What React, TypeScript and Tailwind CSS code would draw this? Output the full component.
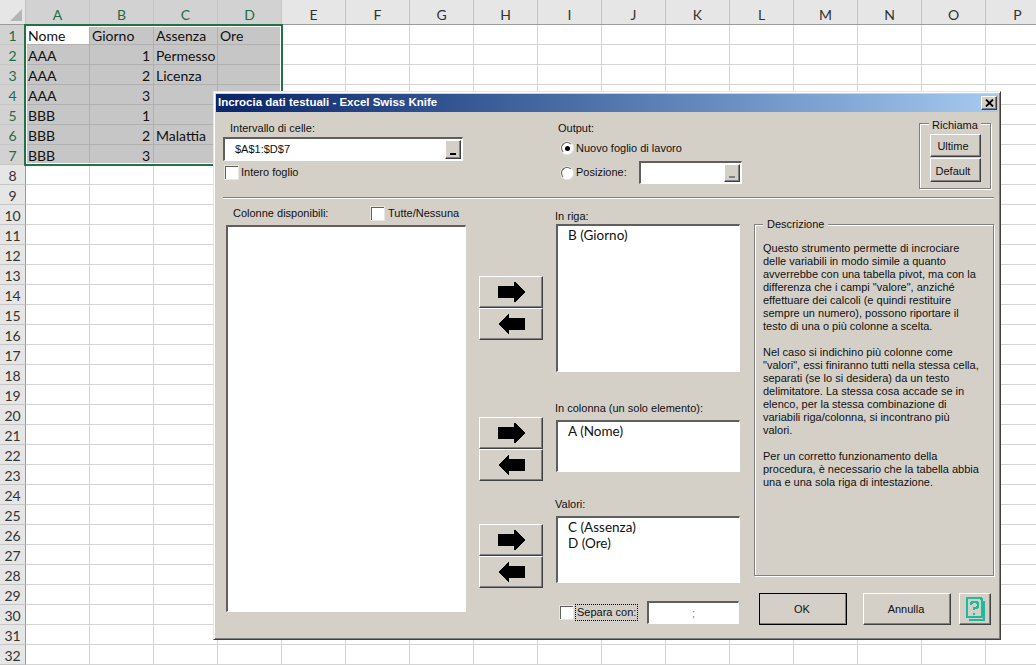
import React from "react";

const COLS = ["A","B","C","D","E","F","G","H","I","J","K","L","M","N","O","P"];
const ROWS = Array.from({ length: 32 }, (_, i) => i + 1);
const DATA: Record<number, [string, string, string, string]> = {
  1: ["Nome", "Giorno", "Assenza", "Ore"],
  2: ["AAA", "1", "Permesso", ""],
  3: ["AAA", "2", "Licenza", ""],
  4: ["AAA", "3", "", ""],
  5: ["BBB", "1", "", ""],
  6: ["BBB", "2", "Malattia", ""],
  7: ["BBB", "3", "", ""],
};

const raised = "bg-[#d4d0c8] border-t border-l border-t-white border-l-white border-r border-b border-r-[#404040] border-b-[#404040] shadow-[inset_-1px_-1px_0_#808080]";
const sunken = "bg-white border-r border-b border-r-white border-b-white border-t-2 border-l-2 border-t-[#5f5f5f] border-l-[#5f5f5f]";

function Sheet() {
  return (
    <div className="w-[1036px] h-[665px] overflow-hidden bg-white font-['Lato',sans-serif] text-[14px] text-[#111]">
      <div className="flex h-[25px] border-b border-b-[#9b9b9b] bg-[#e6e6e6]">
        <div className="w-[26px] shrink-0 border-r border-r-[#c0c0c0] flex items-end justify-end pr-[3px] pb-[3px]">
          <svg width="12" height="12" viewBox="0 0 12 12"><polygon points="12,0 12,12 0,12" fill="#b5b5b5" /></svg>
        </div>
        {COLS.map((c, i) => (
          <div key={c} className={`w-[64px] shrink-0 border-r border-r-[#c6c6c6] flex items-center justify-center pt-[4px] ${i < 4 ? "bg-[#d2d2d2] text-[#1f6b45]" : "text-[#333]"}`}>{c}</div>
        ))}
      </div>
      {ROWS.map((r) => {
        const d = DATA[r];
        return (
          <div key={r} className="flex h-[20px]">
            <div className={`w-[26px] shrink-0 border-r border-r-[#9b9b9b] border-b border-b-[#c6c6c6] flex items-center justify-center pt-[1px] ${d ? "bg-[#d2d2d2] text-[#1f6b45]" : "bg-[#e6e6e6] text-[#333]"}`}>{r}</div>
            {COLS.map((c, i) => {
              const sel = d && i < 4;
              const a1 = r === 1 && i === 0;
              const v = d && i < 4 ? d[i] : "";
              const num = /^\d$/.test(v);
              return (
                <div key={c} className={`w-[64px] shrink-0 border-r border-b flex items-center pt-[1px] px-[2px] whitespace-nowrap ${num ? "justify-end pr-[3px]" : "justify-start"} ${a1 ? "bg-white border-[#b0b0b0]" : sel ? "bg-[#c6c6c6] border-[#b0b0b0]" : "border-[#d4d4d4]"}`}>{v}</div>
              );
            })}
          </div>
        );
      })}
    </div>
  );
}

function ArrowRight() {
  return <svg width="27" height="20" viewBox="0 0 27 20" shapeRendering="crispEdges"><polygon points="0,4 16,4 16,0 17,0 27,10 17,20 16,20 16,16 0,16" fill="#000" /></svg>;
}
function ArrowLeft() {
  return <svg width="27" height="20" viewBox="0 0 27 20" shapeRendering="crispEdges"><polygon points="27,4 11,4 11,0 10,0 0,10 10,20 11,20 11,16 27,16" fill="#000" /></svg>;
}
function ArrowPair({ className }: { className?: string }) {
  return (
    <div className={`flex flex-col ${className ?? ""}`}>
      <button className={`${raised} w-[64px] h-[32px] flex items-center justify-center`}><ArrowRight /></button>
      <button className={`${raised} w-[64px] h-[32px] flex items-center justify-center`}><ArrowLeft /></button>
    </div>
  );
}
function Check({ children, className }: { children: React.ReactNode; className?: string }) {
  return (
    <label className={`flex items-center ${className ?? ""}`}>
      <span className="w-[13px] h-[13px] bg-white border-t border-l border-[#5f5f5f] border-r-white border-b-white shadow-[0_0_0_1px_#e8e6e1] shrink-0" />
      {children}
    </label>
  );
}
function Radio({ on }: { on?: boolean }) {
  return (
    <span className="w-[12px] h-[12px] rounded-full bg-white border border-[#5f5f5f] border-r-white border-b-white shadow-[0_0_0_1px_#e8e6e1] flex items-center justify-center shrink-0">
      {on && <span className="w-[5px] h-[5px] rounded-full bg-black" />}
    </span>
  );
}
function RefInput({ value, disabled, className }: { value?: string; disabled?: boolean; className?: string }) {
  return (
    <div className={`${sunken} flex items-stretch ${className ?? ""}`}>
      <span className="flex-1 pl-[10px] flex items-center">{value}</span>
      <button className={`${raised} w-[16px] my-px mr-[1px] flex items-end justify-center pb-[3px]`}>
        <span className={`w-[6px] h-[2px] ${disabled ? "bg-[#808080]" : "bg-black"}`} />
      </button>
    </div>
  );
}
function ListBox({ items, className }: { items: string[]; className?: string }) {
  return (
    <div className={`${sunken} pl-[10px] pt-[1px] w-[184px] font-['Lato',sans-serif] text-[13.5px] leading-[16px] ${className ?? ""}`}>
      {items.map((t) => <div key={t}>{t}</div>)}
    </div>
  );
}

function Dialog() {
  return (
    <div className="absolute left-[213px] top-[91px] w-[788px] h-[549px] bg-[#d4d0c8] border border-t-[#e8e6e1] border-l-[#e8e6e1] border-r-[#404040] border-b-[#404040] shadow-[inset_1px_1px_0_#fff,inset_-1px_-1px_0_#808080] pt-[2px] px-[1px] font-['Liberation_Sans',sans-serif] text-[11px] text-[#111]">
      <div className="mx-[1px] h-[18px] bg-gradient-to-r from-[#0a246a] to-[#a6caf0] flex items-center justify-between pl-[2px] pr-[1px]">
        <span className="text-white font-bold text-[11.5px]">Incrocia dati testuali - Excel Swiss Knife</span>
        <button className={`${raised} w-[16px] h-[14px] flex items-center justify-center`}>
          <svg width="9" height="8" viewBox="0 0 9 8"><path d="M1 0.500L8 7.500M8 0.500L1 7.500" stroke="#000" strokeWidth="1.800" /></svg>
        </button>
      </div>

      {/* top area */}
      <div className="flex h-[85px] pl-[8px] pr-[5px]">
        <div className="w-[240px] pt-[8px]">
          <div className="h-[16px] pl-[7px] flex items-center">Intervallo di celle:</div>
          <RefInput value="$A$1:$D$7" className="h-[24px] mt-px" />
          <Check className="mt-[3px] ml-[2px] gap-[3px]"><span>Intero foglio</span></Check>
        </div>
        <div className="ml-[95px] w-[190px] pt-[8px]">
          <div className="h-[16px] flex items-center">Output:</div>
          <div className="flex items-center gap-[3px] ml-[3px] mt-[4px] h-[16px]"><Radio on /><span className="mt-[1px]">Nuovo foglio di lavoro</span></div>
          <div className="flex items-center ml-[3px] mt-[5px] h-[23px]">
            <Radio /><span className="ml-[3px] w-[63px]">Posizione:</span>
            <RefInput className="h-[23px] w-[103px]" disabled />
          </div>
        </div>
        <div className="relative ml-auto mr-[3px] mt-[11px] w-[72px] h-[66px] border border-[#808080] shadow-[1px_1px_0_#fff,inset_1px_1px_0_#fff] flex flex-col items-center pt-[10px] gap-px">
          <span className="absolute -top-[7px] left-[9px] bg-[#d4d0c8] px-[3px]">Richiama</span>
          <button className={`${raised} w-[51px] h-[23px] pt-[2px] pr-[4px]`}>Ultime</button>
          <button className={`${raised} w-[51px] h-[24px] pt-[2px] pr-[4px]`}>Default</button>
        </div>
      </div>

      <div className="ml-[8px] mr-[5px] h-[2px] border-t border-t-[#808080] border-b border-b-white" />

      {/* lower area */}
      <div className="flex pl-[11px]">
        <div className="w-[240px]">
          <div className="flex items-center h-[14px] mt-[7px]">
            <span className="ml-[7px] w-[138px]">Colonne disponibili:</span>
            <Check className="gap-[4px]"><span>Tutte/Nessuna</span></Check>
          </div>
          <div className={`${sunken} h-[387px] mt-[5px]`} />
        </div>
        <div className="ml-[13px] w-[64px] flex flex-col">
          <ArrowPair className="mt-[77px]" />
          <ArrowPair className="mt-[77px]" />
          <ArrowPair className="mt-[43px]" />
        </div>
        <div className="ml-[13px] w-[184px]">
          <div className="h-[16px] mt-[9px] -ml-px flex items-center">In riga:</div>
          <ListBox items={["B (Giorno)"]} className="h-[148px]" />
          <div className="h-[16px] mt-[28px] -ml-px flex items-center">In colonna (un solo elemento):</div>
          <ListBox items={["A (Nome)"]} className="h-[52px] mt-[4px]" />
          <div className="h-[16px] mt-[24px] -ml-px flex items-center">Valori:</div>
          <ListBox items={["C (Assenza)", "D (Ore)"]} className="h-[67px] mt-[4px]" />
          <div className="flex items-center mt-[18px] h-[23px]">
            <Check className="ml-[4px] gap-[2px]">
              <span className="border border-dotted border-black px-[1px] h-[17px] w-[63px] flex items-center whitespace-nowrap">Separa con:</span>
            </Check>
            <div className={`${sunken} ml-[9px] w-[92px] h-[23px] flex items-center justify-center text-[#808080]`}>;</div>
          </div>
        </div>
        <div className="ml-[14px] w-[240px]">
          <div className="relative h-[352px] mt-[25px] border border-[#808080] shadow-[1px_1px_0_#fff,inset_1px_1px_0_#fff] pl-[8px] pt-[17px] leading-[13px]">
            <span className="absolute -top-[7px] left-[8px] bg-[#d4d0c8] px-[4px]">Descrizione</span>
            <p>Questo strumento permette di incrociare<br />delle variabili in modo simile a quanto<br />avverrebbe con una tabella pivot, ma con la<br />differenza che i campi "valore", anziché<br />effettuare dei calcoli (e quindi restituire<br />sempre un numero), possono riportare il<br />testo di una o più colonne a scelta.</p>
            <p className="mt-[13px]">Nel caso si indichino più colonne come<br />"valori", essi finiranno tutti nella stessa cella,<br />separati (se lo si desidera) da un testo<br />delimitatore. La stessa cosa accade se in<br />elenco, per la stessa combinazione di<br />variabili riga/colonna, si incontrano più<br />valori.</p>
            <p className="mt-[13px]">Per un corretto funzionamento della<br />procedura, è necessario che la tabella abbia<br />una e una sola riga di intestazione.</p>
          </div>
          <div className="flex mt-[17px] ml-[5px]">
            <button className={`${raised} w-[88px] h-[32px] pr-[2px] outline outline-1 outline-black -outline-offset-1`}>OK</button>
            <button className={`${raised} ml-[16px] w-[88px] h-[32px] pr-[2px]`}>Annulla</button>
            <button className={`${raised} ml-[8px] w-[32px] h-[32px] flex items-center justify-center`}>
              <svg width="22" height="26" viewBox="0 0 22 26" fill="none" stroke="#1dbb9b" shapeRendering="crispEdges" className="mt-[1px] ml-[1px]">
                <path d="M2 1h14v1h1v18h-15z" strokeWidth="2" />
                <path d="M19 4v19h-15" strokeWidth="1.500" />
                <path d="M6 8v-2h1v-1h5v1h1v4h-1v1h-3v2" strokeWidth="2" />
                <path d="M9 15.500v2.500" strokeWidth="2" />
              </svg>
            </button>
          </div>
        </div>
      </div>
    </div>
  );
}

export default function App() {
  return (
    <div className="relative w-[1036px] h-[665px] overflow-hidden">
      <Sheet />
      <div className="absolute left-[24px] top-[24px] w-[259px] h-[142px] border-2 border-[#217346] shadow-[inset_0_0_0_1px_#fff]" />
      <Dialog />
    </div>
  );
}
